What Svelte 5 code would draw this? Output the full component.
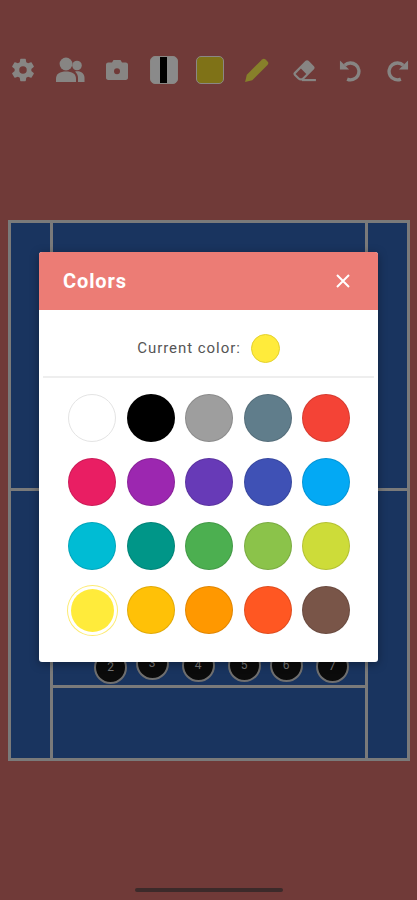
<script>
    const swatches = [
        { color: '#ffffff', edge: '#e4e4e4' }, { color: '#000000' }, { color: '#9e9e9e' }, { color: '#607d8b' }, { color: '#f44336' },
        { color: '#e91e63' }, { color: '#9c27b0' }, { color: '#673ab7' }, { color: '#3f51b5' }, { color: '#03a9f4' },
        { color: '#00bcd4' }, { color: '#009688' }, { color: '#4caf50' }, { color: '#8bc34a' }, { color: '#cddc39' },
        { color: '#ffeb3b', active: true }, { color: '#ffc107' }, { color: '#ff9800' }, { color: '#ff5722' }, { color: '#795548' }
    ];

    const players = [
        { n: 2, x: 83, y: 427.5 },
        { n: 3, x: 124.5, y: 423.5 },
        { n: 4, x: 170.5, y: 425.5 },
        { n: 5, x: 216.5, y: 425.5 },
        { n: 6, x: 258.5, y: 425.5 },
        { n: 7, x: 304.5, y: 426.5 }
    ];
</script>

<div class="screen">
    <div class="toolbar">
        <svg class="icon gear" viewBox="0 0 24 24"><path d="M19.14 12.94c.04-.3.06-.61.06-.94 0-.32-.02-.64-.07-.94l2.03-1.58c.18-.14.23-.41.12-.61l-1.92-3.32c-.12-.22-.37-.29-.59-.22l-2.39.96c-.5-.38-1.03-.7-1.62-.94l-.36-2.54c-.04-.24-.24-.41-.48-.41h-3.84c-.24 0-.43.17-.47.41l-.36 2.54c-.59.24-1.13.57-1.62.94l-2.39-.96c-.22-.08-.47 0-.59.22L2.74 8.87c-.12.21-.08.47.12.61l2.03 1.58c-.05.3-.09.63-.09.94s.02.64.07.94l-2.03 1.58c-.18.14-.23.41-.12.61l1.92 3.32c.12.22.37.29.59.22l2.39-.96c.5.38 1.03.7 1.62.94l.36 2.54c.05.24.24.41.48.41h3.84c.24 0 .44-.17.47-.41l.36-2.54c.59-.24 1.13-.56 1.62-.94l2.39.96c.22.08.47 0 .59-.22l1.92-3.32c.12-.22.07-.47-.12-.61l-2.01-1.58zM12 15.2a3.2 3.2 0 1 1 0-6.4 3.2 3.2 0 0 1 0 6.4z" /></svg>
        <svg class="icon users" viewBox="0 0 30 26">
            <circle cx="11" cy="7" r="6.4" />
            <circle cx="22" cy="8.5" r="4.8" />
            <path d="M1 25v-3.5C1 17 5 14.5 11 14.5s10 2.500 10 7V25z" />
            <path d="M20 14.500c5-1.300 9.500 1.500 9.500 6V25h-6.500v-4c0-2.500-1-4.800-3-6.500z" />
        </svg>
        <svg class="icon camera" viewBox="0 0 24 22"><path fill-rule="evenodd" d="M8.500 1 7 3.500H3.200C1.900 3.500 1 4.500 1 5.700v13.100C1 20.100 1.900 21 3.200 21h17.600c1.300 0 2.200-.9 2.200-2.200V5.700c0-1.200-.9-2.200-2.200-2.200H17L15.500 1zM12 15.300a3 3 0 1 1 0-6 3 3 0 0 1 0 6z" /></svg>
        <div class="chip stripe"><span></span></div>
        <div class="chip olive"></div>
        <svg class="icon pencil" viewBox="0 0 24 24"><path d="M1 23l1.600-6.600L16.700 2.300a2.300 2.300 0 0 1 3.200 0l1.800 1.800a2.300 2.300 0 0 1 0 3.200L7.600 21.400z" /></svg>
        <svg class="icon eraser" viewBox="0 0 24 24"><path d="M16.240 3.560 21.190 8.500c.78.790.78 2.050 0 2.840L12 20.530c-1.560 1.560-4.090 1.560-5.660 0L2.810 17c-.78-.79-.78-2.050 0-2.840L13.410 3.560c.79-.78 2.050-.78 2.830 0zM4.220 15.580l3.540 3.530c.78.79 2.040.79 2.830 0l3.530-3.530-4.950-4.950z" /><path d="M10 20.300h13v2H10z" /></svg>
        <svg class="icon arrow" viewBox="0 0 24 24">
            <path class="arc" d="M6 6.500A8.800 8.800 0 1 1 8.500 21" />
            <path d="M1 1.500v9.500h9.500z" />
        </svg>
        <svg class="icon arrow redo" viewBox="0 0 24 24">
            <path class="arc" d="M6 6.500A8.800 8.800 0 1 1 8.500 21" />
            <path d="M1 1.500v9.500h9.500z" />
        </svg>
    </div>

    <div class="court">
        <div class="side left"></div>
        <div class="middle">
            <div class="lower"></div>
        </div>
        <div class="side right"></div>
        {#each players as p}
            <div class="player" style="left: {p.x}px; top: {p.y}px">{p.n}</div>
        {/each}
    </div>

    <div class="modal">
        <div class="modal-head">
            <span class="title">Colors</span>
            <svg class="close" viewBox="0 0 16 16"><path d="M2 2l12 12M14 2 2 14" /></svg>
        </div>
        <div class="current">
            <span>Current color:</span>
            <span class="current-dot"></span>
        </div>
        <div class="swatches">
            {#each swatches as s}
                <div class="swatch" class:active={s.active} style="background: {s.color}; border-color: {s.edge ?? 'rgba(0,0,0,0.12)'}"></div>
            {/each}
        </div>
    </div>

    <div class="home-bar"></div>
</div>

<style>
    :global(body) {
        margin: 0;
        background: #703a38;
    }

    .screen {
        position: relative;
        width: 417px;
        height: 900px;
        overflow: hidden;
        background: #703a38;
        font-family: Roboto, "Liberation Sans", sans-serif;
    }

    .toolbar {
        display: grid;
        grid-template-columns: repeat(9, 46.75px);
        align-items: center;
        justify-items: center;
        height: 30px;
        padding: 55px 0 0 0;
    }

    .icon {
        display: block;
        fill: #878583;
    }

    .gear {
        width: 28px;
        height: 28px;
    }

    .users {
        width: 30px;
        height: 26px;
    }

    .camera {
        width: 24px;
        height: 22px;
    }

    .chip {
        box-sizing: border-box;
        width: 28px;
        height: 28px;
        border: 1.500px solid #8a8784;
        border-radius: 5px;
    }

    .stripe {
        display: flex;
        justify-content: center;
        background: #8a8a8a;
    }

    .stripe span {
        width: 7px;
        background: #000;
    }

    .olive {
        background: #7f7217;
    }

    .pencil {
        width: 26px;
        height: 26px;
        fill: #87802a;
    }

    .eraser {
        width: 26px;
        height: 26px;
    }

    .arrow {
        width: 23px;
        height: 23px;
    }

    .arrow .arc {
        fill: none;
        stroke: #878583;
        stroke-width: 3.500;
    }

    .redo {
        transform: scaleX(-1);
    }

    .court {
        position: relative;
        box-sizing: border-box;
        display: grid;
        grid-template-columns: 39px 1fr 39px;
        width: 402px;
        height: 541px;
        margin: 135px 0 0 8px;
        border: 3px solid #7a7a7a;
        background: #19345f;
    }

    .side {
        background: linear-gradient(#7a7a7a, #7a7a7a) 0 265px / 100% 3px no-repeat;
    }

    .middle {
        display: flex;
        flex-direction: column;
        justify-content: flex-end;
        border-left: 3px solid #7a7a7a;
        border-right: 3px solid #7a7a7a;
    }

    .lower {
        box-sizing: border-box;
        height: 73px;
        border-top: 3px solid #7a7a7a;
    }

    .player {
        position: absolute;
        box-sizing: border-box;
        width: 33px;
        height: 33px;
        border: 2px solid #6f6f6f;
        border-radius: 50%;
        background: #0b0b0b;
        color: #777;
        font-size: 12px;
        line-height: 29px;
        text-align: center;
    }

    .modal {
        position: absolute;
        left: 39px;
        top: 252px;
        width: 339px;
        height: 410px;
        border-radius: 3px;
        overflow: hidden;
        background: #fff;
        box-shadow: 0 2px 10px rgba(0, 0, 0, 0.35);
    }

    .modal-head {
        display: flex;
        align-items: center;
        justify-content: space-between;
        height: 58px;
        padding: 0 27px 0 24px;
        background: #ec7c75;
    }

    .title {
        color: #fff;
        font-size: 20px;
        font-weight: 700;
        letter-spacing: 0.9px;
    }

    .close {
        width: 16px;
        height: 16px;
        fill: none;
        stroke: #fff;
        stroke-width: 2;
    }

    .current {
        box-sizing: border-box;
        display: flex;
        align-items: center;
        justify-content: center;
        gap: 10px;
        height: 68px;
        margin: 0 4px;
        padding-top: 10px;
        border-bottom: 2px solid #eeeeee;
        color: #555;
        font-size: 15px;
        letter-spacing: 0.95px;
    }

    .current-dot {
        box-sizing: border-box;
        width: 29px;
        height: 29px;
        border: 1px solid #e3d02e;
        border-radius: 50%;
        background: #ffeb3b;
    }

    .swatches {
        display: grid;
        grid-template-columns: repeat(5, 48px);
        grid-auto-rows: 48px;
        justify-content: space-between;
        row-gap: 16px;
        padding: 16px 28px 0 29px;
    }

    .swatch {
        box-sizing: border-box;
        border: 1px solid;
        border-radius: 50%;
    }

    .swatch.active {
        border: 0;
        box-shadow: 0 0 0 3px #fff, 0 0 0 4px #fdeb72;
        width: 43px;
        height: 43px;
        margin: 2.500px;
    }

    .home-bar {
        position: absolute;
        left: 135px;
        bottom: 8px;
        width: 148px;
        height: 4px;
        border-radius: 2px;
        background: #3c2a2a;
    }
</style>
